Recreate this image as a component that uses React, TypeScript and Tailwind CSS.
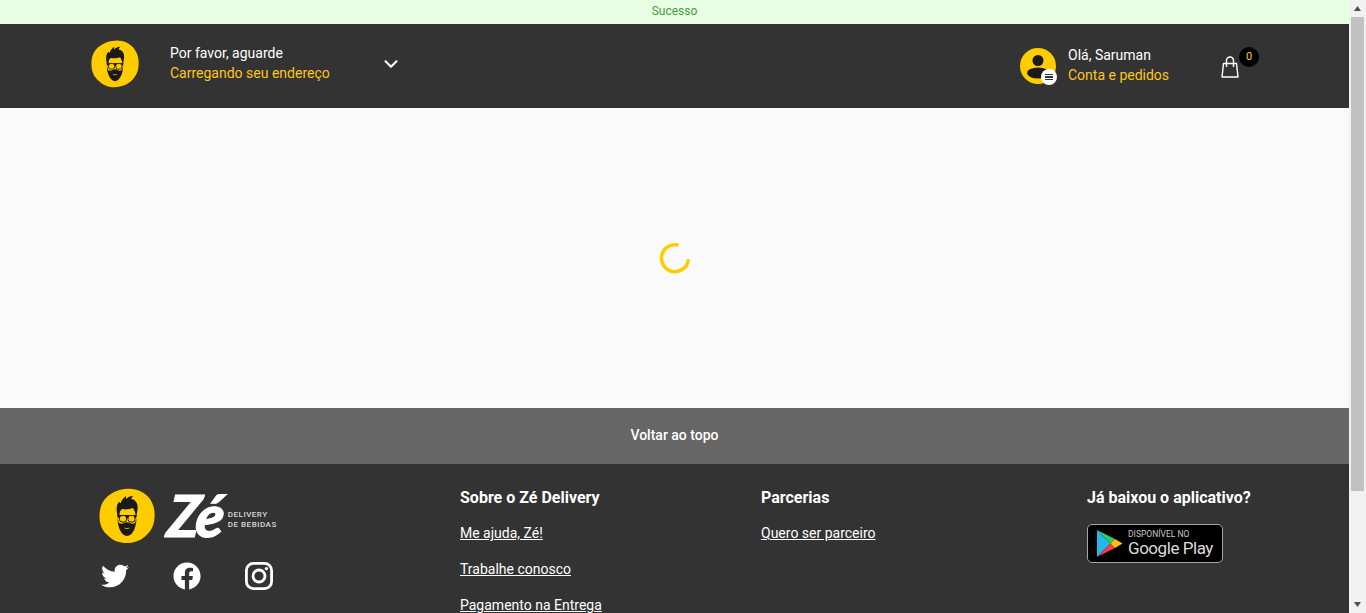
import { ChevronDown } from "lucide-react";
import { FaFacebook, FaTwitter } from "react-icons/fa";

function FaceLogo({ size }: { size: number }) {
  return (
    <svg width={size} height={size} viewBox="0 0 56 56" className="shrink-0">
      <path d="M28 .8C37 0 46 4 51 11c4 6 5 12 4.500 19-.5 8-4 14-10 19-5 4-11 6-18 6-7 0-13-2-18-7C3 43 .5 36 .5 28 .5 20 3 13 9 8c5-4 12-7 19-7.200Z" fill="#ffcc00" />
      <path d="M18 25c-1-5 0-9 2-11l2 1c0-3 3-5 5-7l0 3c2-2 4-3 7-3l-2 3c2 0 4 1 5 3 2 2 2 6 1 11l-1 5H19Z" fill="#1a1a1a" />
      <path d="M20.500 27c0-3 1-5 2.500-6 4 1 8 0 11-1 1 2 2.500 4 2.500 7Z" fill="#ffcc00" />
      <path d="M18.500 30c0 9 4 18 9.500 18s9.500-9 9.500-18l-1.500 5c-2 1-3.500 1-5 0-1.500-1-4.500-1-6 0-1.500 1-3 1-5 0Z" fill="#1a1a1a" />
      <path d="M18 28h20" stroke="#1a1a1a" strokeWidth="1.200" fill="none" />
      <rect x="20.500" y="27.500" width="7" height="6.500" rx="2.500" fill="#ffcc00" stroke="#1a1a1a" strokeWidth="1" />
      <rect x="29" y="27.500" width="7" height="6.500" rx="2.500" fill="#ffcc00" stroke="#1a1a1a" strokeWidth="1" />
      <path d="M25.500 40c1.500.8 3.500.8 5 0" stroke="#ffcc00" strokeWidth=".8" fill="none" />
    </svg>
  );
}

function AccountAvatar() {
  return (
    <div className="relative mt-1 h-9 w-9 shrink-0">
      <svg width="36" height="36" viewBox="0 0 36 36">
        <circle cx="18" cy="18" r="18" fill="#ffcc00" />
        <circle cx="18" cy="12.500" r="5.500" fill="#1a1a1a" />
        <ellipse cx="18" cy="25" rx="11" ry="5.500" fill="#1a1a1a" />
      </svg>
      <div className="absolute left-[21px] top-[21px] flex h-4 w-4 flex-col items-center justify-center gap-[1px] rounded-full bg-white">
        <span className="h-[1.500px] w-2 bg-[#333333]" />
        <span className="h-[1.500px] w-2 bg-[#333333]" />
        <span className="h-[1.500px] w-2 bg-[#333333]" />
      </div>
    </div>
  );
}

function Bag() {
  return (
    <svg width="18" height="22" viewBox="0 0 18 22" fill="none" stroke="#ffffff" strokeWidth="1.400">
      <path d="M2.500 7.500 1 21h16L15.500 7.500Z" strokeLinejoin="round" />
      <path d="M5.500 11V4.500a3.500 3.500 0 0 1 7 0V11" />
    </svg>
  );
}

function Instagram() {
  return (
    <svg width="28" height="28" viewBox="0 0 28 28" fill="none" stroke="#ffffff" strokeWidth="2.800">
      <rect x="1.400" y="1.400" width="25.200" height="25.200" rx="7" />
      <circle cx="14" cy="14" r="6" />
      <circle cx="21.400" cy="6.600" r="1.700" fill="#ffffff" stroke="none" />
    </svg>
  );
}

function PlayBadge() {
  return (
    <div className="flex h-[39px] w-[136px] items-center rounded-[5px] border border-[#a6a6a6] bg-black pl-[9px] text-[#dcdcdc]">
      <svg width="26" height="27" viewBox="0 0 26 27" className="shrink-0">
        <path d="M0 0v27l13.500-13.500Z" fill="#22b8e8" />
        <path d="M0 0 13.500 13.500 18 9Z" fill="#34c96f" />
        <path d="M0 27 13.500 13.500 18 18Z" fill="#ee3f4b" />
        <path d="M18 9l7.500 4.500L18 18l-4.500-4.500Z" fill="#ffc107" />
      </svg>
      <div className="ml-[5px] flex flex-col">
        <span className="text-[8.5px] leading-[9px] text-[#c8c8c8]">DISPONÍVEL NO</span>
        <span className="text-[17px] leading-[19px] tracking-[-0.45px]">Google Play</span>
      </div>
    </div>
  );
}

export default function App() {
  return (
    <div className="flex h-[613px] overflow-hidden font-['Roboto',sans-serif]">
      <main className="flex min-w-0 flex-1 flex-col">
        <div className="flex h-6 shrink-0 items-center justify-center bg-[#e9ffe3] pb-[2px] text-xs text-[#3f9c3f]">Sucesso</div>

        <header className="flex h-[84px] shrink-0 items-center justify-between bg-[#333333] pb-1 pl-[91px] pr-[91px]">
          <div className="flex items-center">
            <FaceLogo size={48} />
            <div className="mb-[2px] ml-[31px] w-[210px] text-sm leading-5">
              <div className="text-white">Por favor, aguarde</div>
              <div className="text-[#ffc61a]">Carregando seu endereço</div>
            </div>
            <ChevronDown size={22} strokeWidth={2.300} className="text-white" />
          </div>
          <div className="flex items-center">
            <AccountAvatar />
            <div className="ml-3 mt-[2px] w-[151px] text-sm leading-5">
              <div className="text-white">Olá, Saruman</div>
              <div className="text-[#ffc61a]">Conta e pedidos</div>
            </div>
            <div className="relative mt-[6px] h-[22px] w-[39px] pl-[2px]">
              <Bag />
              <div className="absolute left-[20px] top-[-9px] flex h-5 w-5 items-center justify-center rounded-full bg-black text-[11px] text-[#ffcc00]">0</div>
            </div>
          </div>
        </header>

        <section className="flex h-[300px] shrink-0 items-center justify-center bg-[#fafafa]">
          <svg width="32" height="32" viewBox="0 0 32 32" className="mb-[1px]" fill="none">
            <path d="M18 2.800A13.500 13.500 0 1 0 29.200 18.800" stroke="#ffcc00" strokeWidth="3.500" strokeLinecap="round" />
          </svg>
        </section>

        <div className="flex h-14 shrink-0 items-center justify-center bg-[#666666] pb-[2px] text-sm font-medium text-white">Voltar ao topo</div>

        <footer className="flex flex-1 bg-[#333333] pl-[99px] pt-6 text-white">
          <div className="w-[361px] shrink-0">
            <div className="flex items-start">
              <FaceLogo size={56} />
              <div className="ml-[13px] flex items-center pt-[2px]">
                <span className="inline-block -skew-x-6 font-['Lato',sans-serif] text-[58px] font-black italic leading-[50px] tracking-[-3px] [-webkit-text-stroke:1px_white]">Zé</span>
                <div className="ml-[6px] mt-[10px] text-[8px] font-medium leading-[10px] tracking-[0.5px] text-[#d8d8d8]">
                  <div>DELIVERY</div>
                  <div>DE BEBIDAS</div>
                </div>
              </div>
            </div>
            <div className="mt-[18px] flex items-center gap-11 pl-[2px]">
              <FaTwitter size={28} />
              <FaFacebook size={28} />
              <Instagram />
            </div>
          </div>

          <div className="w-[301px] shrink-0">
            <h3 className="mt-[1px] text-base font-bold leading-[18px]">Sobre o Zé Delivery</h3>
            <ul className="mt-[17px] flex flex-col gap-[18px] text-sm leading-[18px] underline">
              <li>Me ajuda, Zé!</li>
              <li>Trabalhe conosco</li>
              <li>Pagamento na Entrega</li>
            </ul>
          </div>

          <div className="w-[326px] shrink-0">
            <h3 className="mt-[1px] text-base font-bold leading-[18px]">Parcerias</h3>
            <ul className="mt-[17px] text-sm leading-[18px] underline">
              <li>Quero ser parceiro</li>
            </ul>
          </div>

          <div>
            <h3 className="mt-[1px] text-base font-bold leading-[18px]">Já baixou o aplicativo?</h3>
            <div className="mt-[17px]">
              <PlayBadge />
            </div>
          </div>
        </footer>
      </main>

      <aside className="flex w-[17px] shrink-0 flex-col items-center bg-[#f1f1f1]">
        <svg width="17" height="17" viewBox="0 0 17 17" className="shrink-0">
          <path d="M8.500 6 12 11H5Z" fill="#505050" />
        </svg>
        <div className="h-[474px] w-[13px] shrink-0 bg-[#c1c1c1]" />
        <div className="flex-1" />
        <svg width="17" height="17" viewBox="0 0 17 17" className="shrink-0">
          <path d="M5 6h7l-3.500 5Z" fill="#505050" />
        </svg>
      </aside>
    </div>
  );
}
